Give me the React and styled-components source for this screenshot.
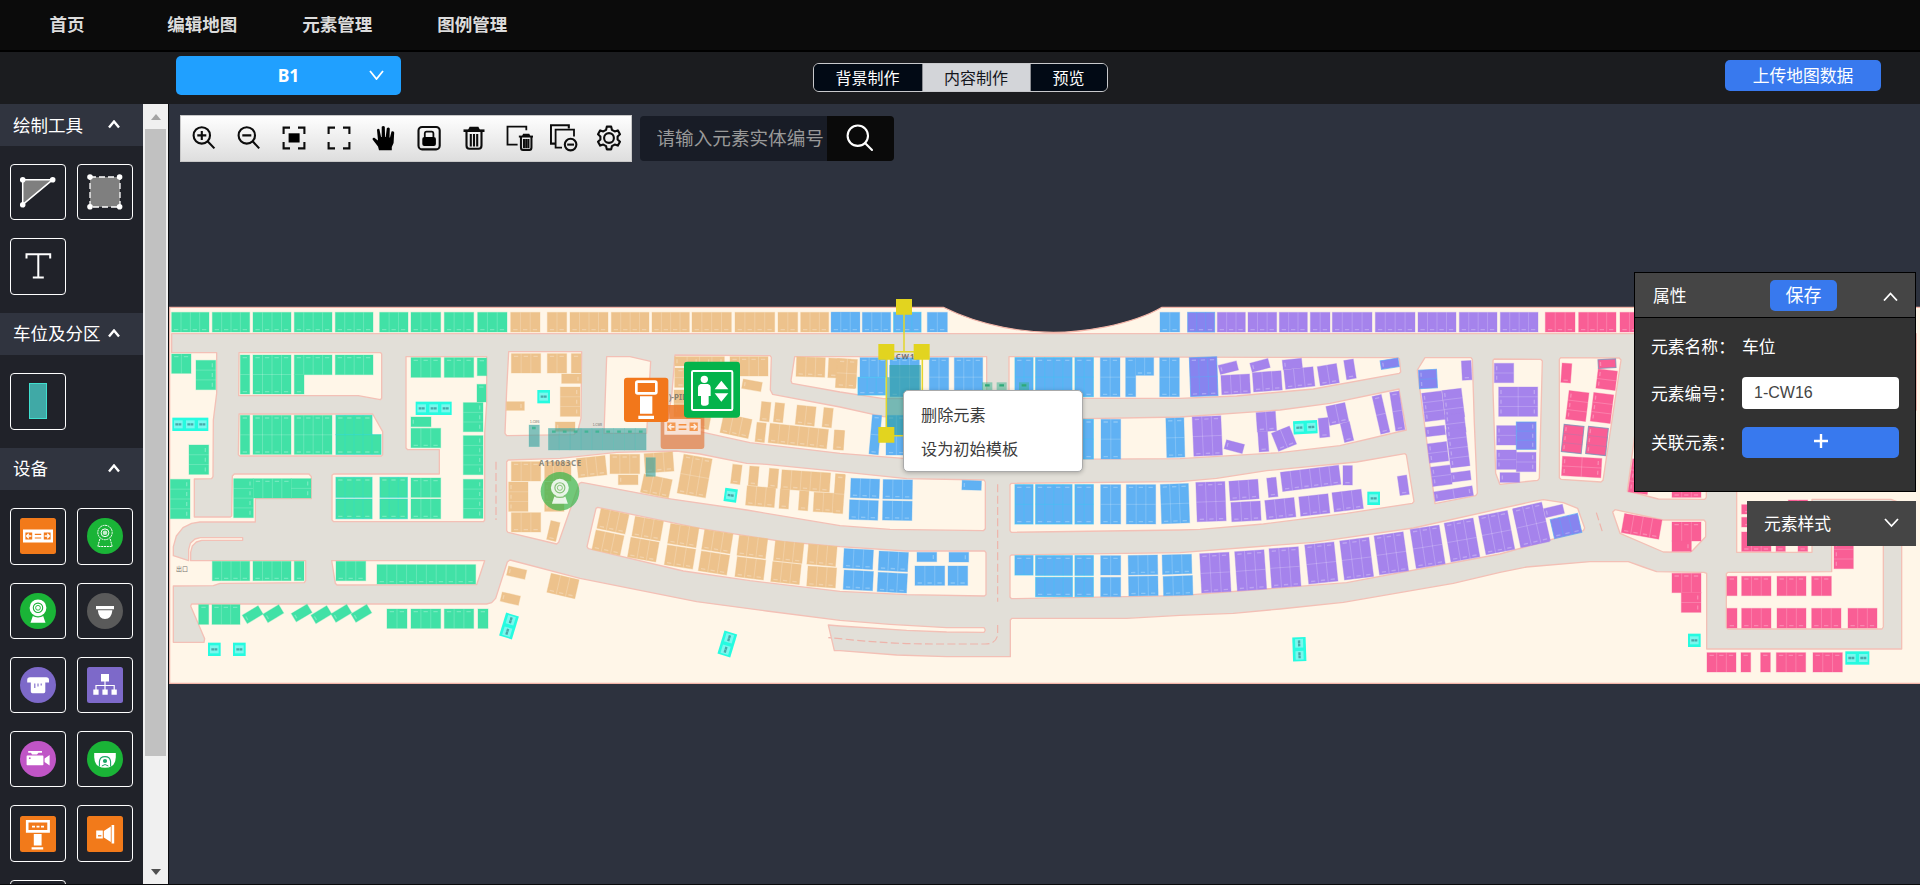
import React from "react";
import styled, { createGlobalStyle } from "styled-components";

const GlobalStyle = createGlobalStyle`
  * { box-sizing: border-box; }
  html, body { margin: 0; height: 100%; overflow: hidden; }
  body {
    background: #2d323e;
    color: #fff;
    font-family: "Noto Sans", "Noto Sans CJK SC", sans-serif;
  }
`;

const Page = styled.div`
  display: flex;
  flex-direction: column;
  width: 1920px;
  height: 885px;
  overflow: hidden;
  border-bottom: 1px solid #08090b;
`;

const Nav = styled.nav`
  display: flex;
  align-items: center;
  flex: none;
  height: 52px;
  padding: 0 0 3px 49.5px;
  background: #0b0b0b;
  border-bottom: 2px solid #000;
`;

const NavItem = styled.a`
  font: bold 17.5px/26px "Noto Sans CJK SC", sans-serif;
  color: #dcdcdc;
  margin-right: ${(p) => p.$gap}px;
`;

const SubBar = styled.header`
  display: flex;
  flex: none;
  align-items: flex-start;
  height: 52px;
  background: #1b1c1f;
`;

const FloorSelect = styled.button`
  display: grid;
  grid-template-columns: 50px 1fr 50px;
  align-items: center;
  justify-items: center;
  width: 225px;
  height: 39px;
  margin: 4px 0 0 176px;
  padding: 0 0 1px;
  border: 0;
  border-radius: 5px;
  background: #20a0ff;
  color: #fff;
  font: bold 17.5px/24px "Noto Sans", sans-serif;
  & > span { grid-column: 2; }
`;

const Tabs = styled.div`
  display: flex;
  width: 295px;
  height: 29px;
  margin: 11px 0 0 411.5px;
  border: 1px solid #c9cacd;
  border-radius: 6px;
  overflow: hidden;
`;

const Tab = styled.button`
  width: ${(p) => p.$width}px;
  padding: 0 0 2px;
  border: 0;
  border-right: ${(p) => (p.$last ? "0" : "1px solid #8b8d92")};
  background: ${(p) => (p.$active ? "#d3d5d9" : "#020a15")};
  color: ${(p) => (p.$active ? "#14161c" : "#fff")};
  font: 16px/24px "Noto Sans CJK SC", sans-serif;
`;

const BlueButton = styled.button`
  display: flex;
  align-items: center;
  justify-content: center;
  width: ${(p) => p.$width}px;
  height: 31px;
  padding: 0 0 2px;
  border: 0;
  border-radius: 5px;
  background: #3879ee;
  color: #fff;
  font: ${(p) => p.$size || 16.8}px/24px "Noto Sans CJK SC", sans-serif;
`;

const UploadSlot = styled.div`
  margin: 8px 39px 0 auto;
`;

const Main = styled.main`
  display: flex;
  flex: 1;
  min-height: 0;
`;

const Sidebar = styled.aside`
  width: 143px;
  flex: none;
  overflow: hidden;
  background: #202229;
`;

const GroupHeader = styled.div`
  display: flex;
  align-items: center;
  justify-content: space-between;
  height: 42.7px;
  padding: 0 23px 1px 13px;
  background: #30343f;
  font: 17.5px/26px "Noto Sans CJK SC", sans-serif;
  white-space: nowrap;
  &:first-child { height: 42px; }
`;

const Tiles = styled.div`
  display: grid;
  grid-template-columns: 56px 56px;
  grid-auto-rows: 56.3px;
  gap: 18px 11px;
  padding: 18px 10px;
`;

const Tile = styled.button`
  display: flex;
  align-items: center;
  justify-content: center;
  padding: 0;
  border: 1px solid #fff;
  border-radius: 4px;
  background: transparent;
`;

const ScrollTrack = styled.div`
  display: flex;
  flex-direction: column;
  align-items: center;
  width: 25px;
  flex: none;
  background: #f0f0f0;
`;

const ScrollThumb = styled.div`
  width: 21px;
  height: 627px;
  background: #c1c1c1;
`;

const ScrollArrow = styled.div`
  width: 0;
  height: 0;
  margin: ${(p) => (p.$down ? "auto 0 9px" : "10px 0 9px")};
  border: 5.5px solid transparent;
  ${(p) => (p.$down ? "border-top: 6px solid #505050; border-bottom: 0;" : "border-bottom: 6px solid #a3a3a3; border-top: 0;")}
`;

const Stage = styled.section`
  position: relative;
  flex: 1;
  min-width: 0;
  border-left: 1px solid #0a0b0e;
  background: #2d323e;
`;

const MapSvg = styled.svg`
  position: absolute;
  left: -1px;
  top: 186px;
  display: block;
`;

const TopTools = styled.div`
  position: relative;
  display: flex;
  align-items: center;
  gap: 8px;
  padding: 11px 0 0 11px;
`;

const ToolBar = styled.div`
  display: flex;
  align-items: center;
  width: 452px;
  height: 47px;
  padding-bottom: 1px;
  border: 1px solid #c8c8c8;
  background: linear-gradient(#fefefe, #dedede);
`;

const ToolButton = styled.button`
  flex: 1;
  display: flex;
  align-items: center;
  justify-content: center;
  padding: 0;
  border: 0;
  background: none;
`;

const Search = styled.div`
  display: flex;
  width: 254px;
  height: 45px;
  border-radius: 4px;
  overflow: hidden;
`;

const SearchInput = styled.input`
  width: 187px;
  padding: 0 0 4px 16.5px;
  border: 0;
  background: #181c26;
  color: #fff;
  font: 18.6px/28px "Noto Sans CJK SC", sans-serif;
  &::placeholder { color: #999; opacity: 1; }
`;

const SearchButton = styled.button`
  display: flex;
  align-items: center;
  justify-content: center;
  flex: 1;
  padding: 0 1px 1px 0;
  border: 0;
  background: #0a0a0a;
`;

const Panels = styled.div`
  position: absolute;
  right: 4px;
  top: 168px;
  display: flex;
  flex-direction: column;
  align-items: flex-end;
  gap: 9px;
  font: 16.8px/24px "Noto Sans CJK SC", sans-serif;
`;

const Panel = styled.div`
  width: 282px;
  height: 220px;
  border: 1px solid #000;
  background: #323232;
`;

const PanelHeader = styled.div`
  display: grid;
  grid-template-columns: 117px 67px 1fr;
  align-items: center;
  height: 45px;
  padding: 0 17px 0 18px;
  background: #454545;
  border-bottom: 1px solid #000;
  & > svg { justify-self: end; margin-top: 3px; }
`;

const Field = styled.div`
  display: flex;
  align-items: center;
  height: 32px;
  margin-left: 16px;
  margin-top: ${(p) => p.$top}px;
`;

const FieldLabel = styled.label`
  width: 91px;
  white-space: nowrap;
`;

const FieldInput = styled.input`
  width: 157px;
  height: 32px;
  padding: 0 0 0 12px;
  border: 0;
  border-radius: 4px;
  background: #fff;
  color: #444;
  font: 16px/24px "Liberation Sans", sans-serif;
`;

const StyleHeader = styled.div`
  display: flex;
  align-items: center;
  justify-content: space-between;
  width: 169px;
  height: 45px;
  padding: 0 17px 1px 17px;
  background: #454545;
`;

const Menu = styled.div`
  position: absolute;
  left: 734px;
  top: 286px;
  display: flex;
  flex-direction: column;
  width: 180px;
  height: 82px;
  padding: 6px 0;
  border: 1px solid #aaa;
  border-radius: 5px;
  background: #fff;
  box-shadow: 0 1px 4px rgba(0, 0, 0, 0.25);
`;

const MenuItem = styled.div`
  padding-left: 17px;
  color: #3c3c3c;
  font: 16.2px/34px "Noto Sans CJK SC", sans-serif;
`;

const Chevron = ({ up, w = 15, h = 8, sw = 1.8 }) => (
  <svg width={w} height={h + 2} viewBox={`0 0 ${w} ${h + 2}`} fill="none" stroke="#fff" strokeWidth={sw}>
    <path d={up ? `M1 ${h + 1}L${w / 2} 1.5L${w - 1} ${h + 1}` : `M1 1L${w / 2} ${h + 0.5}L${w - 1} 1`} />
  </svg>
);

/* ---------- toolbar glyphs, each on a 28 x 28 grid ---------- */
const Glyph = ({ children }) => (
  <svg width="28" height="28" viewBox="0 0 28 28" fill="none" stroke="#0c0c0c" strokeWidth="2.1">{children}</svg>
);

const Bin = () => (
  <>
    <path d="M3.5 6.7H24.5" strokeWidth="2.6" />
    <path d="M9.6 2.8h8.8l2 4H7.6z" fill="#0c0c0c" stroke="none" />
    <path d="M6.5 7V21.5Q6.5 24.8 9.5 24.8H18.5Q21.5 24.8 21.5 21.5V7M10.8 10V22.5M14 10V22.5M17.2 10V22.5" />
  </>
);

const toolGlyphs = [
  <><circle cx="11.8" cy="11.4" r="8.2" /><path d="M17.6 17.2L24.4 24.4M7.3 11.4H16.3M11.8 6.9V15.9" /></>,
  <><circle cx="11.8" cy="11.4" r="8.2" /><path d="M17.6 17.2L24.2 24.4M7.3 11.4H16.3" /></>,
  <><path d="M3.6 10V3.6H10M18 3.6H24.4V10M24.4 18V24.4H18M10 24.4H3.6V18" /><rect x="8.6" y="9.3" width="11" height="9.2" fill="#000" stroke="none" /></>,
  <path d="M3.6 10V3.6H10M18 3.6H24.4V10M24.4 18V24.4H18M10 24.4H3.6V18" />,
  <path stroke="none" fill="#000" d="M9 26.2L8 22.6L2.6 15.4Q2.2 13.4 4.3 13.8L8 16.6L7 6Q7.5 4.2 9.4 5.2L11.1 13H11.7L11.7 2.8Q13.2 1 14.8 2.8L15.1 13H15.7L16.8 4.2Q18.5 2.6 19.8 4.5L19.5 13.6H20L21.5 7.6Q23.4 6.6 24.2 8.6L23.6 19L21.8 23V26.2Z" />,
  <><rect x="3.5" y="3" width="21.2" height="22.4" rx="3.6" /><path d="M9.8 13V9.6Q9.8 7.6 11.6 7.6H16.6Q18.4 7.6 18.4 9.6V13" strokeWidth="1.8" /><rect x="7.3" y="13" width="13.6" height="9" rx="2" fill="#000" stroke="none" /></>,
  <Bin />,
  <><path d="M12.6 20.6H2.5V2.6H21.3V6.2" strokeWidth="1.8" /><g transform="translate(11.4 7.6) scale(.7 .74)" strokeWidth="2.9"><Bin /></g></>,
  <><path d="M5.6 19.6H.9V1.2H18.8V4.4" /><path d="M12 23.6H5.6V5.6H24V12.4" strokeWidth="1.8" /><circle cx="20.6" cy="20.6" r="5.8" /><path d="M17.2 20.6H24" /></>,
  <><circle cx="14" cy="14" r="4.9" /><path strokeLinejoin="round" d="M11.8 2.6H16.2L16.9 5.8L19.7 7.4L22.8 6.4L25 10.2L22.6 12.5V15.5L25 17.8L22.8 21.6L19.7 20.6L16.9 22.2L16.2 25.4H11.8L11.1 22.2L8.3 20.6L5.2 21.6L3 17.8L5.4 15.5V12.5L3 10.2L5.2 6.4L8.3 7.4L11.1 5.8Z" /></>,
];

/* ---------- palette icons, each on a 36 x 36 grid ---------- */
const Icon = ({ children }) => (
  <svg width="36" height="36" viewBox="0 0 36 36" fill="none">{children}</svg>
);
const Square = ({ fill }) => <rect width="36" height="36" rx="2.5" fill={fill} />;
const Disc = ({ fill }) => <circle cx="18" cy="18" r="18" fill={fill} />;

const drawIcons = [
  <Icon>
    <path d="M2.7 5.7H32.7L2.7 30.7Z" fill="#7f7f7f" stroke="#fff" strokeWidth="1.5" />
    <g fill="#fff"><circle cx="2.7" cy="5.7" r="2.8" /><circle cx="32.7" cy="5.7" r="2.8" /><circle cx="2.7" cy="30.7" r="2.8" /></g>
  </Icon>,
  <Icon>
    <rect x="3" y="3" width="30" height="30" fill="#7f7f7f" stroke="#fff" strokeWidth="1.3" strokeDasharray="6 3" />
    <g fill="#fff"><circle cx="3" cy="3" r="2.8" /><circle cx="32.6" cy="3" r="2.8" /><circle cx="3" cy="32.8" r="2.8" /><circle cx="32.6" cy="32.8" r="2.8" /></g>
  </Icon>,
  <Icon><path d="M6.5 10.5V6.2H30.2V10.5M18.3 6.2V29.6M12.8 29.6H23.8" stroke="#fff" strokeWidth="2" /></Icon>,
];

const lotIcons = [
  <Icon><rect x="9.5" y=".5" width="17" height="35" fill="#40a9a6" stroke="#3fe0cf" /></Icon>,
];

const Barrier = () => (
  <>
    <rect x="3" y="11.5" width="30" height="13" fill="#fff" />
    <path d="M5.4 14.5H12.2V21.5H5.4ZM23.8 14.5H30.6V21.5H23.8Z" fill="#f27a1a" />
    <path d="M14.8 16.3H21.2M14.8 20H21.2" stroke="#f27a1a" strokeWidth="1.2" fill="none" />
    <path d="M6.4 18H11.4M8.8 15.8L6.6 18L8.8 20.2M24.6 18H29.6M27.2 15.8L29.4 18L27.2 20.2" stroke="#fff" strokeWidth="1.3" fill="none" />
  </>
);

const Webcam = ({ bg }) => (
  <>
    <path d="M13 22.5H23L25.5 29.8H10.5Z" fill="#fff" />
    <circle cx="18" cy="14.8" r="8.4" fill="#fff" />
    <circle cx="18" cy="14.8" r="4.7" fill="none" stroke={bg} strokeWidth="1.1" />
    <circle cx="18" cy="14.8" r="2.4" fill="none" stroke={bg} strokeWidth=".9" />
    <path d="M12.4 22.2Q18 25.5 23.6 22.2" stroke={bg} strokeWidth="1.2" fill="none" />
  </>
);

const deviceIcons = [
  <Icon><Square fill="#f27a1a" /><Barrier /></Icon>,
  <Icon>
    <Disc fill="#1ab437" />
    <g stroke="#fff" strokeWidth="1"><circle cx="18" cy="14.5" r="7.2" strokeDasharray="2 .6" /><circle cx="18" cy="14.8" r="3.9" /><path d="M12.8 21L10.8 28.5H25.2L23.2 21" strokeDasharray="2 .8" /></g>
    <circle cx="18" cy="14.8" r="2.3" fill="#fff" fillOpacity=".75" />
  </Icon>,
  <Icon><Disc fill="#1ab437" /><Webcam bg="#1ab437" /></Icon>,
  <Icon><Disc fill="#5a5a5a" /><path d="M9 13H27V16.3H9ZM10.8 17.2H25.4Q24.5 26 18 26Q11.8 26 10.8 17.2Z" fill="#fff" /></Icon>,
  <Icon>
    <Disc fill="#7d69c9" />
    <path d="M7.2 15.6V13Q7.2 10.3 10 10.3H26.2Q29 10.3 29 13V15.6ZM10.8 15H25.3V24.5Q25.3 26.2 23.6 26.2H12.5Q10.8 26.2 10.8 24.5Z" fill="#fff" />
    <path d="M14.8 16.4V21M18 16.4V19.6M21.2 16.4V18.4" stroke="#7d69c9" strokeWidth="1.1" />
  </Icon>,
  <Icon>
    <Square fill="#7d69c9" />
    <path d="M14 7H22V14.4H14ZM6.3 22.6H11.6V27.8H6.3ZM15.4 22.6H20.7V27.8H15.4ZM24.5 22.6H29.8V27.8H24.5Z" fill="#fff" />
    <path d="M18 14V23M9 23V18.5H27.2V23" stroke="#fff" strokeWidth="1.2" />
  </Icon>,
  <Icon>
    <Disc fill="#c055c6" />
    <path d="M8.2 10H22V11.8H18.5L17 13.4H12L11 11.8H8.2ZM7 14.4H22.6Q23.4 14.4 23.4 15.2V23.4Q23.4 24.2 22.6 24.2H7.4Q6.6 24.2 6.6 23.4V15.2ZM24.6 17.6L29.6 14V24.6L24.6 21Z" fill="#fff" />
    <circle cx="9.8" cy="17.2" r=".9" fill="#c055c6" />
  </Icon>,
  <Icon>
    <Disc fill="#1ab437" />
    <path d="M7.2 12H28.8V16Q28.5 26.8 18 26.8Q7.5 26.8 7.2 16Z" fill="#fff" />
    <path d="M12.4 25.4V20.5Q13 15.6 18 15.6Q23 15.6 23.6 20.5V25.4" stroke="#19a765" strokeWidth="1.1" />
    <circle cx="18" cy="20" r="2.1" fill="#19a765" /><path d="M14.8 25Q18 22 21.4 25" stroke="#19a765" />
  </Icon>,
  <Icon>
    <Square fill="#f27a1a" />
    <path d="M7.2 5.2H28.6V15.4H7.2Z" stroke="#fff" strokeWidth="2.6" />
    <path d="M12 10.6H15M16.5 10.6H19.5M21 10.6H24" stroke="#fff" strokeWidth="1.7" />
    <path d="M13.8 18H21.6V29.6H13.8ZM11.6 31.2H23.2V33.5H11.6Z" fill="#fff" />
  </Icon>,
  <Icon>
    <Square fill="#f27a1a" />
    <path d="M24.6 9H27.2V27.4H24.6ZM16.8 15L23.8 10.4V26L16.8 21.4ZM9.2 14.6H15.8V22.4H9.2Z" fill="#fff" />
    <path d="M11 19.8H14.4" stroke="#f27a1a" strokeWidth="1.3" />
  </Icon>,
  <Icon />,
];

/* ---------- map data: three units to a pixel, split into five sections ---------- */
const COLORS = { g: "#41e1a6", o: "#edc28c", b: "#60b1f3", p: "#a583ec", i: "#8784ef", k: "#f95e95" };
const top = (color, spans) => spans.map(([a, b, n]) => [color, a, 67, b, 126, n, 1]);

/* lots: [color, x0, y0, x1, y1, columns, rows, flags]  flags: t = label on top, r = label at the right, c = cyan outline
   tilted: [color, cx, cy, width, height, columns, rows, angle] */
const sections = [
  {
    x: 495,
    lots: [
      ...top("g", [[20, 132, 4], [142, 254, 4], [264, 378, 4], [388, 501, 4], [511, 624, 4], [644, 729, 3], [738, 827, 3], [838, 926, 3], [938, 1026, 3]]),
      ["g", 20, 192, 78, 250, 2, 1, "t"], ["g", 93, 211, 152, 299, 1, 3, "r"],
      ["g", 226, 195, 254, 312, 1, 2], ["g", 264, 195, 378, 312, 4, 2], ["g", 388, 195, 501, 254, 4, 1, "t"], ["g", 388, 254, 417, 312, 1, 1], ["g", 511, 195, 624, 254, 4, 1, "t"],
      ["g", 226, 376, 254, 493, 1, 2], ["g", 264, 376, 378, 493, 4, 2], ["g", 388, 376, 501, 493, 4, 2], ["g", 513, 376, 621, 434, 4, 1, "tc"], ["g", 513, 434, 648, 493, 5, 1, "c"],
      ["g", 738, 203, 827, 262, 3, 1, "t"], ["g", 838, 203, 926, 262, 3, 1, "t"], ["g", 937, 204, 965, 257, 1, 1, "t"], ["g", 936, 283, 963, 336, 1, 1, "t"],
      ["g", 895, 338, 954, 425, 1, 3, "r"], ["g", 895, 437, 954, 554, 1, 4, "r"], ["g", 895, 568, 954, 685, 1, 4, "r"],
      ["g", 738, 381, 798, 410, 1, 1], ["g", 738, 415, 827, 473, 3, 1],
      ["g", 72, 465, 131, 553, 1, 3, "r"], ["g", 16, 568, 75, 686, 1, 4, "r"],
      ["g", 206, 566, 265, 683, 1, 4, "r"], ["g", 265, 566, 379, 624, 4, 1, "t"], ["g", 379, 566, 438, 624, 1, 2, "r"],
      ["g", 513, 562, 621, 622, 4, 1, "tc"], ["g", 513, 627, 621, 686, 4, 1, "c"], ["g", 645, 562, 727, 622, 3, 1, "tc"], ["g", 645, 627, 727, 686, 3, 1, "c"],
      ["g", 738, 564, 827, 622, 3, 1, "t"], ["g", 738, 627, 827, 686, 3, 1],
      ["g", 142, 814, 254, 872, 4, 1], ["g", 264, 814, 378, 872, 4, 1], ["g", 388, 814, 417, 872, 1, 1], ["g", 513, 814, 602, 872, 3, 1], ["g", 636, 824, 932, 882, 10, 1],
      ["g", 101, 944, 131, 1003, 1, 1, "t"], ["g", 141, 944, 225, 1003, 3, 1, "t"], ["g", 666, 957, 726, 1015, 2, 1, "t"], ["g", 738, 957, 827, 1015, 3, 1, "t"], ["g", 838, 957, 926, 1015, 3, 1, "t"], ["g", 939, 957, 969, 1015, 1, 1, "t"],
    ],
    tilted: [
      ["g", 263, 974, 55, 29, 1, 1, -31], ["g", 325, 971, 55, 29, 1, 1, -31], ["g", 410, 969, 55, 29, 1, 1, -31], ["g", 469, 974, 55, 29, 1, 1, -31], ["g", 529, 970, 55, 29, 1, 1, -31], ["g", 589, 970, 55, 29, 1, 1, -31],
    ],
    shops: [[76, 403, 3, 0], [806, 355, 3, 0], [148, 1078, 1, 0], [223, 1078, 1, 0], [1032, 1008, 2, 107]],
  },
  {
    x: 1500,
    lots: [
      ...top("o", [[32, 120, 3], [142, 200, 2], [210, 324, 4], [334, 447, 4], [456, 568, 4], [576, 694, 4], [705, 824, 4], [834, 893, 2], [902, 986, 3]]),
      ...top("b", [[994, 1079, 3]]),
      ["o", 34, 191, 122, 249, 3, 1, "t"], ["o", 142, 191, 200, 249, 2, 1, "t"], ["o", 214, 191, 243, 249, 1, 1, "t"], ["o", 185, 252, 244, 280, 1, 1, "r"], ["o", 181, 291, 240, 379, 1, 3, "r"], ["o", 19, 335, 73, 361, 1, 1, "r"], ["o", 166, 396, 225, 424, 1, 1],
      ["o", 524, 200, 673, 228, 4, 1, "t"], ["o", 524, 234, 560, 292, 1, 2], ["o", 690, 200, 804, 258, 4, 1, "t"], ["o", 522, 300, 580, 380, 1, 2],
      ["o", 34, 515, 122, 573, 3, 1, "t"], ["o", 134, 515, 213, 573, 3, 1, "t"], ["o", 26, 576, 84, 664, 1, 3], ["o", 134, 576, 192, 664, 1, 3], ["o", 34, 668, 122, 726, 3, 1],
      ["o", 330, 493, 419, 551, 3, 1, "t"], ["o", 355, 555, 414, 584, 1, 1],
    ],
    tilted: [
      ["o", 50, 848, 56, 28, 1, 1, 13], ["o", 31, 926, 56, 28, 1, 1, 13], ["o", 189, 888, 86, 58, 3, 1, 13], ["o", 160, 723, 28, 58, 1, 1, 13],
      ["o", 275, 530, 86, 58, 3, 1, -6], ["o", 477, 517, 86, 58, 3, 1, -4], ["o", 469, 588, 86, 56, 3, 1, 12], ["o", 584, 558, 86, 118, 3, 2, 10],
      ["o", 595, 385, 72, 56, 2, 1, 11], ["o", 756, 286, 58, 28, 1, 1, 10], ["o", 708, 408, 86, 58, 3, 1, 12], ["o", 796, 365, 28, 58, 1, 1, 6], ["o", 837, 368, 28, 58, 1, 1, 6], ["o", 782, 427, 28, 58, 1, 1, 6], ["o", 917, 377, 57, 58, 2, 1, 6], ["o", 983, 383, 28, 58, 1, 1, 6], ["o", 895, 438, 176, 58, 6, 1, 6], ["o", 1016, 450, 29, 58, 1, 1, 4],
      ["o", 932, 231, 86, 58, 3, 1, 2], ["o", 1018, 235, 66, 58, 2, 1, 3], ["o", 1036, 280, 58, 28, 1, 1, 3],
      ["o", 709, 553, 28, 58, 1, 1, 7], ["o", 761, 558, 28, 58, 1, 1, 5], ["o", 820, 565, 28, 58, 1, 1, 5], ["o", 782, 620, 86, 58, 3, 1, 5], ["o", 917, 573, 146, 58, 5, 1, 4], ["o", 853, 627, 28, 58, 1, 1, 4], ["o", 911, 632, 28, 58, 1, 1, 4], ["o", 984, 638, 86, 58, 3, 1, 3], ["o", 1019, 581, 28, 58, 1, 1, 4],
      ["o", 339, 694, 86, 60, 3, 1, 12], ["o", 324, 758, 86, 60, 3, 1, 12], ["o", 443, 716, 86, 60, 3, 1, 10], ["o", 430, 779, 86, 60, 3, 1, 10], ["o", 550, 737, 86, 60, 3, 1, 9], ["o", 540, 801, 86, 60, 3, 1, 9], ["o", 652, 755, 86, 60, 3, 1, 9], ["o", 642, 819, 86, 60, 3, 1, 9],
      ["o", 757, 771, 86, 60, 3, 1, 7], ["o", 751, 835, 86, 60, 3, 1, 7], ["o", 866, 786, 86, 60, 3, 1, 6], ["o", 858, 849, 86, 60, 3, 1, 6], ["o", 966, 796, 86, 60, 3, 1, 5], ["o", 965, 861, 86, 60, 3, 1, 4],
    ],
    shops: [[131, 320, 1, 0], [692, 616, 1, 8], [682, 1062, 2, 107]],
  },
  {
    x: 2520,
    lots: [
      ...top("b", [[-26, 59, 3], [67, 152, 3], [262, 322, 2], [960, 1019, 2]]),
      ["b", 161, 67, 243, 126, 3, 1, "c"],
      ["b", 150, 203, 238, 320, 3, 2], ["b", 268, 203, 326, 320, 2, 2], ["b", 343, 203, 428, 320, 3, 2], ["b", 60, 203, 142, 262, 3, 1, "t"], ["b", 54, 262, 136, 315, 3, 1, "c"],
      ["b", 525, 203, 579, 320, 2, 2, "c"], ["b", 587, 203, 696, 320, 4, 2, "c"], ["b", 705, 203, 760, 320, 2, 2, "c"], ["b", 781, 203, 840, 320, 2, 2], ["b", 857, 203, 887, 320, 1, 2], ["b", 887, 203, 941, 256, 2, 1], ["b", 959, 203, 1018, 320, 2, 2],
      ["b", 138, 376, 200, 495, 2, 2], ["b", 587, 388, 696, 507, 4, 2], ["b", 705, 388, 760, 507, 2, 2, "c"], ["b", 783, 388, 842, 507, 2, 2],
      ["b", 525, 584, 579, 702, 2, 2, "c"], ["b", 587, 584, 696, 702, 4, 2, "c"], ["b", 705, 584, 760, 702, 2, 2, "c"], ["b", 782, 584, 842, 702, 2, 2], ["b", 859, 584, 947, 702, 3, 2],
      ["b", 231, 787, 290, 815, 1, 1, "r"], ["b", 327, 787, 386, 816, 1, 1, "r"], ["b", 225, 828, 314, 886, 3, 1], ["b", 324, 828, 383, 886, 2, 1],
      ["b", 525, 797, 579, 855, 2, 1, "tc"], ["b", 587, 797, 697, 856, 4, 1, "tc"], ["b", 705, 797, 760, 856, 2, 1, "tc"], ["b", 587, 862, 697, 920, 4, 1, "c"], ["b", 705, 862, 760, 920, 2, 1, "c"],
      ["b", 782, 797, 842, 855, 2, 1, "t"], ["b", 782, 862, 842, 920, 2, 1],
    ],
    tilted: [
      ["o", 20, 250, 60, 86, 2, 2, 3], ["o", -2, 450, 28, 58, 1, 1, 4], ["o", -2, 612, 28, 116, 1, 2, 4],
      ["b", 106, 434, 28, 118, 1, 2, 5],
      ["b", 75, 595, 86, 58, 3, 1, 2], ["b", 71, 660, 86, 58, 3, 1, 2], ["b", 173, 598, 88, 58, 3, 1, 1], ["b", 172, 662, 88, 58, 3, 1, 1], ["b", 395, 586, 58, 28, 1, 1, 2],
      ["b", 55, 807, 88, 58, 3, 1, 3], ["b", 55, 871, 88, 58, 3, 1, 3], ["b", 160, 814, 88, 58, 3, 1, 3], ["b", 157, 878, 88, 58, 3, 1, 3],
      ["b", 1006, 443, 54, 118, 2, 2, -1.5], ["b", 1005, 641, 84, 118, 3, 2, -2],
      ["b", 909, 825, 88, 58, 3, 1, -1], ["b", 910, 888, 88, 58, 3, 1, -1], ["b", 1011, 823, 88, 58, 3, 1, -1.5], ["b", 1014, 887, 88, 58, 3, 1, -1.5],
    ],
    shops: [],
  },
  {
    x: 3540,
    lots: [
      ["i", 23, 67, 104, 126, 3, 1, "c"],
      ...top("p", [[112, 196, 3], [204, 290, 3], [298, 382, 3], [391, 450, 2], [457, 576, 4], [586, 705, 4], [714, 828, 4], [838, 951, 4], [961, 1074, 4]]),
      ["p", 943, 220, 1001, 278, 1, 2], ["p", 956, 291, 1073, 379, 2, 3], ["p", 950, 407, 1009, 465, 1, 2], ["i", 1009, 396, 1068, 478, 1, 3, "rc"], ["p", 950, 480, 1009, 538, 1, 2], ["p", 1009, 487, 1068, 545, 1, 2, "r"], ["p", 960, 548, 1019, 577, 1, 1],
    ],
    tilted: [
      ["i", 71, 260, 82, 116, 3, 2, -2, "c"],
      ["p", 145, 233, 56, 28, 1, 1, -14], ["p", 167, 283, 86, 58, 3, 1, -3], ["p", 240, 226, 56, 28, 1, 1, -15], ["p", 262, 274, 86, 58, 3, 1, -4], ["p", 337, 222, 58, 29, 1, 1, -6], ["p", 358, 264, 88, 58, 3, 1, -6], ["p", 445, 254, 58, 58, 2, 1, -9], ["p", 510, 238, 29, 58, 1, 1, -9], ["i", 629, 221, 54, 26, 1, 1, -9, "c"],
      ["p", 82, 438, 86, 118, 3, 2, -2.5], ["p", 163, 470, 56, 28, 1, 1, 15], ["p", 259, 395, 58, 58, 2, 1, -4], ["p", 250, 455, 29, 60, 1, 1, -4], ["p", 312, 446, 58, 58, 2, 1, -22], ["p", 432, 413, 30, 58, 1, 1, -5], ["p", 472, 372, 58, 58, 2, 1, -12], ["p", 501, 426, 28, 58, 1, 1, -13], ["p", 603, 373, 28, 116, 1, 2, -13], ["p", 652, 363, 28, 117, 1, 2, -9],
      ["p", 93, 635, 87, 118, 3, 2, -2], ["p", 192, 600, 87, 58, 3, 1, -4], ["p", 198, 664, 88, 58, 3, 1, -3], ["p", 277, 592, 28, 58, 1, 1, -6], ["p", 301, 656, 88, 58, 3, 1, -6], ["p", 392, 565, 176, 58, 6, 1, -7], ["p", 503, 556, 28, 58, 1, 1, 0], ["p", 403, 645, 88, 58, 3, 1, -6], ["p", 503, 632, 88, 58, 3, 1, -7], ["p", 670, 586, 28, 58, 1, 1, -8],
      ["p", 106, 848, 88, 118, 3, 2, -3], ["p", 212, 841, 88, 118, 3, 2, -4], ["p", 315, 832, 88, 118, 3, 2, -4], ["p", 424, 819, 88, 118, 3, 2, -6], ["p", 530, 806, 88, 118, 3, 2, -7], ["p", 634, 790, 88, 118, 3, 2, -8], ["p", 743, 770, 88, 118, 3, 2, -9], ["p", 846, 750, 88, 118, 3, 2, -10], ["p", 950, 728, 88, 118, 3, 2, -11], ["p", 1053, 706, 88, 118, 3, 2, -12],
      ["i", 744, 267, 54, 56, 1, 2, -3, "c"], ["p", 860, 241, 29, 58, 1, 1, -3],
      ["p", 760, 349, 60, 86, 1, 3, -7], ["p", 820, 341, 58, 86, 1, 3, -7], ["p", 766, 423, 58, 28, 1, 1, -7], ["p", 826, 400, 58, 58, 1, 2, -7], ["p", 774, 487, 58, 58, 1, 2, -7], ["p", 834, 473, 58, 116, 1, 4, -7], ["p", 784, 557, 58, 58, 1, 2, -7], ["p", 843, 559, 58, 28, 1, 1, -7], ["p", 821, 611, 116, 29, 2, 1, -9],
    ],
    shops: [[376, 412, 2, -3], [581, 625, 1, 0], [358, 1078, 2, 88]],
  },
  {
    x: 4500,
    lots: [
      ["k", 136, 67, 225, 126, 3, 1], ["k", 236, 67, 348, 126, 4, 1], ["k", 360, 67, 445, 126, 3, 1],
      ["k", 516, 590, 603, 622, 3, 1], ["k", 516, 696, 603, 753, 3, 1, "t"], ["k", 516, 753, 574, 784, 1, 1, "r"],
      ["k", 865, 630, 923, 690, 2, 1], ["k", 725, 644, 760, 672, 1, 1], ["k", 725, 682, 760, 711, 1, 1], ["k", 725, 726, 813, 784, 3, 1], ["k", 828, 726, 856, 784, 1, 1], ["k", 894, 726, 923, 784, 1, 1], ["k", 1002, 720, 1060, 836, 1, 4],
      ["k", 516, 850, 603, 908, 3, 1, "t"], ["k", 544, 908, 603, 967, 1, 2, "r"],
      ["k", 681, 859, 711, 917, 1, 1, "t"], ["k", 725, 859, 813, 917, 3, 1, "t"], ["k", 831, 859, 918, 917, 3, 1, "t"], ["k", 935, 859, 994, 917, 2, 1, "t"],
      ["k", 681, 955, 711, 1014, 1, 1], ["k", 725, 955, 813, 1014, 3, 1], ["k", 831, 955, 918, 1014, 3, 1], ["k", 935, 955, 1023, 1014, 3, 1], ["k", 1044, 955, 1131, 1014, 3, 1],
      ["k", 621, 1088, 708, 1146, 3, 1, "t"], ["k", 723, 1088, 752, 1146, 1, 1, "t"], ["k", 782, 1088, 811, 1146, 1, 1, "t"], ["k", 829, 1088, 917, 1146, 3, 1, "t"], ["k", 939, 1088, 1027, 1146, 3, 1, "t"],
    ],
    tilted: [
      ["p", 95, 704, 88, 118, 3, 2, -13], ["p", 162, 663, 58, 28, 1, 1, -13], ["i", 198, 708, 84, 58, 3, 1, -13, "c"],
      ["k", 199, 249, 29, 58, 1, 1, 4], ["k", 321, 221, 53, 26, 1, 1, -3, "d"], ["k", 320, 269, 58, 58, 1, 2, 7], ["k", 232, 348, 60, 86, 1, 3, 7], ["k", 306, 354, 60, 86, 1, 3, 7], ["k", 218, 447, 60, 82, 1, 3, 6, "d"], ["k", 291, 453, 60, 82, 1, 3, 6, "d"], ["k", 245, 531, 118, 58, 2, 2, 3],
      ["k", 420, 560, 58, 100, 1, 3, 8], ["k", 425, 709, 114, 58, 4, 1, 10],
    ],
    shops: [[583, 1051, 1, 0], [1072, 1104, 2, 0]],
  },
];

const outlineFor = (color, flags) => {
  if (flags.includes("d")) return { edge: "#7b8fb8", line: "#b07ba8", edgeOpacity: 0.8, lineOpacity: 0.6 };
  if (flags.includes("c")) {
    const tone = color === "g" ? "#2fdcc8" : color === "i" ? "#5aa6f5" : "#3fc3f5";
    return { edge: tone, line: tone, edgeOpacity: 0.7, lineOpacity: 0.6 };
  }
  return { edge: COLORS[color], line: "#fff", edgeOpacity: 0.35, lineOpacity: 0.25 };
};

const Lot = ({ color, x, y, w, h, cols, rows, flags = "" }) => {
  const marks = [];
  const cw = w / cols;
  const ch = h / rows;
  for (let r = 0; r < rows; r++) {
    for (let c = 0; c < cols; c++) {
      const sideways = cw > ch * 1.3;
      if (sideways) {
        const mx = flags.includes("r") || c > 0 ? x + (c + 1) * cw - 10 : x + 7;
        marks.push(`M${mx} ${y + r * ch + ch / 2 - 6}v12`);
      } else {
        const my = flags.includes("t") || (rows > 1 && r === 0) ? y + 8 : y + (r + 1) * ch - 7;
        marks.push(`M${x + c * cw + cw / 2 - 7} ${my}h13`);
      }
    }
  }
  let grid = "";
  for (let c = 1; c < cols; c++) grid += `M${x + c * cw} ${y}v${h}`;
  for (let r = 1; r < rows; r++) grid += `M${x} ${y + r * ch}h${w}`;
  const o = outlineFor(color, flags);
  return (
    <g fill="none">
      <rect x={x} y={y} width={w} height={h} fill={COLORS[color]} stroke={o.edge} strokeOpacity={o.edgeOpacity} strokeWidth="3" />
      <path d={grid} stroke={o.line} strokeOpacity={o.lineOpacity} strokeWidth="2.4" />
      <path d={marks.join("")} stroke="#fff" strokeOpacity=".27" strokeWidth="4" />
    </g>
  );
};

const Shop = ({ cx, cy, n, angle }) => {
  const w = n === 1 ? 38 : n * 36;
  return (
    <g transform={`translate(${cx} ${cy}) rotate(${angle})`}>
      <rect x={-w / 2} y="-20" width={w} height="40" fill="#26fbe0" />
      {Array.from({ length: n }, (_, i) => {
        const mx = -w / 2 + (w / n) * (i + 0.5);
        return (
          <g key={i}>
            <rect x={mx - 13} y="-12" width="26" height="24" fill="#78f8ee" />
            <path d={`M${mx - 9} 0h18`} stroke="#3f9a9c" strokeOpacity=".85" strokeWidth="7" strokeDasharray="8.4 1.2" />
          </g>
        );
      })}
    </g>
  );
};

const pts = (x, list) => list.map(([a, b]) => `${a + x},${b}`).join(" ");
const A = 495, B = 1500, C = 2520, D = 3540, E = 4500;

const roadOutline = [
  pts(A, [[20, 131]]), pts(E, [[1249, 131], [1249, 360], [710, 360], [710, 787], [936, 787], [936, 628], [1173, 628], [1205, 640], [1205, 1077], [620, 1077], [620, 850], [612, 847], [470, 845], [430, 831], [385, 815], [270, 815], [80, 831], [0, 847]]),
  pts(D, [[820, 880], [490, 937], [300, 957], [160, 970], [0, 976]]), pts(C, [[860, 985], [516, 985], [511, 990], [511, 1100], [320, 1100], [170, 1095], [0, 1082]]),
  pts(B, [[1003, 1082], [985, 1005]]), pts(C, [[0, 1008], [200, 1021], [320, 1026], [432, 1027], [436, 1020], [432, 1013], [320, 1013], [150, 1003], [0, 991]]),
  pts(B, [[800, 963], [590, 935], [240, 865], [30, 810], [22, 816]]), pts(A, [[992, 925], [980, 938], [965, 942], [80, 942], [77, 948], [119, 1046], [117, 1057], [25, 1057], [25, 888], [145, 887], [165, 880], [418, 878], [422, 872], [422, 812], [77, 812], [77, 787], [82, 768], [94, 756], [110, 751], [233, 751], [233, 743], [106, 743], [90, 747], [76, 760], [71, 778], [71, 812], [25, 797], [25, 770], [34, 738], [54, 713], [80, 700], [105, 696], [271, 696], [271, 626], [439, 626], [439, 560], [432, 552], [208, 552], [202, 558], [200, 678], [196, 681], [88, 681], [88, 567], [140, 566], [144, 560], [145, 390], [155, 310], [155, 188], [20, 188]]),
].join(" ");

const islands = [
  pts(A, [[222, 188], [647, 188], [650, 192], [650, 325], [646, 329], [580, 317], [221, 317]]),
  pts(A, [[222, 372], [623, 372], [653, 425], [653, 494], [649, 498], [224, 498], [220, 494]]),
  pts(A, [[506, 552], [823, 552], [823, 479], [728, 479], [723, 474], [723, 200], [965, 200], [965, 340], [959, 430], [959, 691], [955, 695], [506, 695], [501, 690], [501, 556]]),
  pts(A, [[500, 812], [959, 812], [935, 884], [516, 885], [511, 880]]),
  pts(B, [[26, 185], [245, 185], [243, 385], [234, 420], [222, 434], [20, 437], [15, 430], [20, 300]]),
  pts(B, [[320, 200], [390, 200], [452, 214], [440, 430], [312, 430]]),
  pts(B, [[525, 195], [810, 197], [814, 202], [811, 300], [818, 313]]) + " " + pts(C, [[0, 351], [130, 380], [437, 390], [437, 510], [190, 505], [0, 490]]) + " " + pts(B, [[750, 458], [600, 425], [500, 400], [515, 320]]),
  pts(B, [[884, 200]]) + " " + pts(C, [[440, 200], [440, 326], [130, 326], [0, 306]]) + " " + pts(B, [[876, 280], [873, 272]]),
  pts(B, [[25, 510], [180, 505], [350, 487], [530, 483], [600, 492], [740, 520], [800, 523]]) + " " + pts(C, [[0, 545], [200, 566], [432, 570], [436, 576], [436, 716], [430, 722], [150, 718], [0, 707]]) + " " + pts(B, [[740, 660], [500, 625], [245, 577], [238, 580], [176, 757], [170, 762], [24, 727], [20, 722], [20, 515]]),
  pts(B, [[293, 652], [600, 715], [850, 755]]) + " " + pts(C, [[0, 770], [200, 783], [434, 783], [438, 788], [438, 914], [433, 918], [200, 914], [0, 904]]) + " " + pts(B, [[750, 872], [550, 843], [265, 776], [261, 770], [288, 655]]),
  pts(C, [[507, 200]]) + " " + pts(D, [[654, 203], [658, 206], [662, 246], [658, 250], [400, 297], [170, 318], [0, 325]]) + " " + pts(C, [[507, 325]]),
  pts(C, [[510, 390]]) + " " + pts(D, [[0, 381], [300, 360], [450, 340], [657, 297], [679, 420], [480, 467], [300, 488], [0, 506]]) + " " + pts(C, [[510, 509]]),
  pts(C, [[514, 580]]) + " " + pts(D, [[0, 575], [110, 565], [260, 542], [530, 516], [675, 491], [679, 495], [702, 634], [697, 640], [500, 670], [250, 702], [60, 718], [0, 720]]) + " " + pts(C, [[514, 727], [510, 722], [510, 584]]),
  pts(C, [[514, 795]]) + " " + pts(D, [[0, 788], [400, 757], [700, 714]]) + " " + pts(E, [[100, 634], [130, 629], [190, 638], [233, 655], [254, 714], [250, 722], [0, 792]]) + " " + pts(D, [[500, 878], [0, 917]]) + " " + pts(C, [[514, 926], [510, 921], [510, 799]]),
  pts(D, [[735, 203], [873, 203], [877, 208], [883, 400], [892, 610], [887, 617], [765, 641], [712, 240]]),
  pts(D, [[943, 207]]) + " " + pts(E, [[122, 208], [127, 213], [118, 565], [113, 571], [0, 583]]) + " " + pts(D, [[959, 582], [947, 550], [939, 300], [939, 211]]),
  pts(E, [[182, 203], [358, 204], [363, 210], [309, 571], [303, 576], [183, 568], [178, 563], [178, 208]]),
  pts(E, [[405, 430], [619, 430], [619, 622], [614, 628], [475, 627], [382, 603]]),
  pts(E, [[345, 659], [490, 690], [612, 690], [617, 696], [617, 740], [577, 782], [570, 787], [490, 786], [360, 730], [338, 666]]),
  pts(E, [[684, 847], [995, 845], [995, 650], [1150, 650], [1150, 1011], [1146, 1017], [684, 1017], [679, 1012], [679, 851]]),
];

const ParkingMap = () => (
  <MapSvg width="1752" height="420" viewBox="504 0 5256 1260">
    <path d={`M509 52H${C + 310}C${C + 430} 112 ${C + 560} 127 ${C + 640} 127S${C + 870} 108 ${C + 966} 52H5762V1180H509Z`} fill="#fff6e8" stroke="#f3b5a8" strokeWidth="3.5" />
    <g stroke="#f3c0b6" strokeWidth="4" strokeLinejoin="round">
      <polygon points={roadOutline} fill="#e2dfd8" />
      {islands.map((p, i) => <polygon key={i} points={p} fill="#fff6e8" />)}
    </g>
    <g fill="none" stroke="#eeb3aa" strokeWidth="3.5" strokeDasharray="24 10">
      <path d={`M${A + 993} 515V690M${C + 473} 583V935M${C + 473} 1005V1035Q${C + 468} 1062 ${C + 435} 1062H${C + 280}Q${C + 150} 1062 ${C} 1046L${B + 985} 1043M${E + 289} 668L${E + 308} 728`} />
    </g>
    {sections.map((s) => (
      <g key={s.x} transform={`translate(${s.x} 0)`}>
        {s.lots.map(([color, x0, y0, x1, y1, cols, rows, flags], i) => (
          <Lot key={i} color={color} x={x0} y={y0} w={x1 - x0} h={y1 - y0} cols={cols} rows={rows} flags={flags} />
        ))}
        {s.tilted.map(([color, cx, cy, w, h, cols, rows, angle, flags], i) => (
          <g key={i} transform={`translate(${cx} ${cy}) rotate(${angle})`}>
            <Lot color={color} x={-w / 2} y={-h / 2} w={w} h={h} cols={cols} rows={rows} flags={flags} />
          </g>
        ))}
        {s.shops.map(([cx, cy, n, angle], i) => <Shop key={i} cx={cx} cy={cy} n={n} angle={angle} />)}
      </g>
    ))}
    <text x={A + 33} y="844" fontSize="18" fill="#77746f" fontFamily="Noto Sans CJK SC">出口</text>

    <g transform={`translate(${B} 0)`}>
      <g fill="#2f9f9c" fillOpacity=".6" stroke="#58c0b6" strokeOpacity=".4" strokeWidth="2">
        <rect x="87" y="405" width="31" height="65" />
        {Array.from({ length: 9 }, (_, i) => <rect key={i} x={145 + i * 32.6} y="415" width="32.6" height="65" />)}
        <rect x="438" y="503" width="28" height="56" />
      </g>
      <path d="M96 414h11M156 425H430" stroke="#35b48d" strokeOpacity=".8" strokeWidth="7" strokeDasharray="11 21.6" />
      <g fontFamily="Liberation Sans" fill="#6a6a66" fontSize="9"><text x="90" y="400">1-CW6</text><text x="278" y="409">1-CW8</text></g>
      <g fillOpacity=".7" strokeOpacity=".8">
        <rect x="482" y="345" width="131" height="132" rx="9" fill="#e47a42" />
        <path d="M504 345H604V387H510Z" fill="#f2771b" fillOpacity=".5" />
        <g transform="translate(482 345) scale(3.64)"><Barrier /></g>
      </g>
      <text x="506" y="331" fontSize="24" fontWeight="bold" fill="#6d6a62" fillOpacity=".8" fontFamily="Noto Sans">)-PID</text>
      <rect x="372" y="263" width="133" height="133" rx="9" fill="#f2771b" />
      <rect x="409" y="275" width="60" height="35" rx="4" fill="none" stroke="#fff" strokeWidth="8" />
      <path d="M420 319H457V371H420ZM415 377H462V387H415Z" fill="#fff" />
      <rect x="552" y="215" width="168" height="168" rx="10" fill="#04b34b" />
      <rect x="576" y="243" width="121" height="117" rx="4" fill="none" stroke="#fff" strokeWidth="6" />
      <circle cx="613" cy="268" r="11" fill="#fff" />
      <path d="M602 282H624Q632 284 632 292V318H626V342Q622 349 613 347Q604 349 603 342V318H594V292Q594 284 602 282ZM664 272L685 298H644ZM664 335L685 310H644Z" fill="#fff" />
      <text x="116" y="529" fontSize="24" fontWeight="bold" fill="#6f7066" fillOpacity=".8" fontFamily="Noto Sans" textLength="128">A11083CE</text>
      <circle cx="180" cy="604" r="58" fill="#36b54c" fillOpacity=".7" />
      <g transform="translate(122 546) scale(3.2)" opacity=".85"><Webcam bg="#8ac47c" /></g>
    </g>

    <g transform={`translate(${C} 0)`}>
      <path d="M148 225H243V320L238 360V435H140V262H148Z" fill="#2f9f9c" fillOpacity=".6" />
      <g fill="#35b48d" fillOpacity=".5"><rect x="426" y="277" width="31" height="30" /><rect x="470" y="277" width="30" height="30" /><rect x="537" y="277" width="30" height="30" /></g>
      <path d="M435 286h14M478 286h14M545 286h14" stroke="#2fa978" strokeWidth="7" />
      <text x="167" y="207" fontSize="23" fontWeight="bold" fill="#5c5c58" fillOpacity=".85" fontFamily="Noto Sans" textLength="56">CW1</text>
      <path d="M192 50V185M139 185H247V437H139Z" fill="none" stroke="#e3d62b" strokeWidth="4.5" />
      <path d="M168 27H216V74H168ZM115 162H163V209H115ZM221 162H269V209H221ZM115 411H163V458H115Z" fill="#e2d41f" />
    </g>
  </MapSvg>
);

const ToolGroup = ({ title, icons }) => (
  <>
    <GroupHeader>{title}<Chevron up w={12} h={6.5} sw={2.4} /></GroupHeader>
    <Tiles>{icons.map((icon, i) => <Tile key={i}>{icon}</Tile>)}</Tiles>
  </>
);

export default function App() {
  return (
    <Page>
      <GlobalStyle />
      <Nav>
        <NavItem $gap={82.8}>首页</NavItem>
        <NavItem $gap={65}>编辑地图</NavItem>
        <NavItem $gap={65}>元素管理</NavItem>
        <NavItem $gap={0}>图例管理</NavItem>
      </Nav>
      <SubBar>
        <FloorSelect><span>B1</span><Chevron h={8.5} /></FloorSelect>
        <Tabs>
          <Tab $width={109}>背景制作</Tab>
          <Tab $width={108} $active>内容制作</Tab>
          <Tab $width={76} $last>预览</Tab>
        </Tabs>
        <UploadSlot><BlueButton $width={156}>上传地图数据</BlueButton></UploadSlot>
      </SubBar>
      <Main>
        <Sidebar>
          <ToolGroup title="绘制工具" icons={drawIcons} />
          <ToolGroup title="车位及分区" icons={lotIcons} />
          <ToolGroup title="设备" icons={deviceIcons} />
        </Sidebar>
        <ScrollTrack>
          <ScrollArrow />
          <ScrollThumb />
          <ScrollArrow $down />
        </ScrollTrack>
        <Stage>
          <ParkingMap />
          <TopTools>
            <ToolBar>
              {toolGlyphs.map((g, i) => <ToolButton key={i}><Glyph>{g}</Glyph></ToolButton>)}
            </ToolBar>
            <Search>
              <SearchInput placeholder="请输入元素实体编号" />
              <SearchButton>
                <svg width="28" height="28" viewBox="0 0 28 28" fill="none" stroke="#fff" strokeWidth="2.1" strokeLinecap="round">
                  <circle cx="11.8" cy="11.7" r="10.2" /><path d="M19 19L26 26" />
                </svg>
              </SearchButton>
            </Search>
          </TopTools>
          <Panels>
            <Panel>
              <PanelHeader>
                <span>属性</span>
                <BlueButton $width={67} $size={18}>保存</BlueButton>
                <Chevron up h={7.5} />
              </PanelHeader>
              <Field $top={12}><FieldLabel>元素名称：</FieldLabel>车位</Field>
              <Field $top={15}><FieldLabel>元素编号：</FieldLabel><FieldInput defaultValue="1-CW16" /></Field>
              <Field $top={17}>
                <FieldLabel>关联元素：</FieldLabel>
                <BlueButton $width={157}>
                  <svg width="14" height="14" viewBox="0 0 14 14" stroke="#fff" strokeWidth="2.4"><path d="M0 7H14M7 0V14" /></svg>
                </BlueButton>
              </Field>
            </Panel>
            <StyleHeader>元素样式<Chevron h={7.5} /></StyleHeader>
          </Panels>
          <Menu>
            <MenuItem>删除元素</MenuItem>
            <MenuItem>设为初始模板</MenuItem>
          </Menu>
        </Stage>
      </Main>
    </Page>
  );
}
